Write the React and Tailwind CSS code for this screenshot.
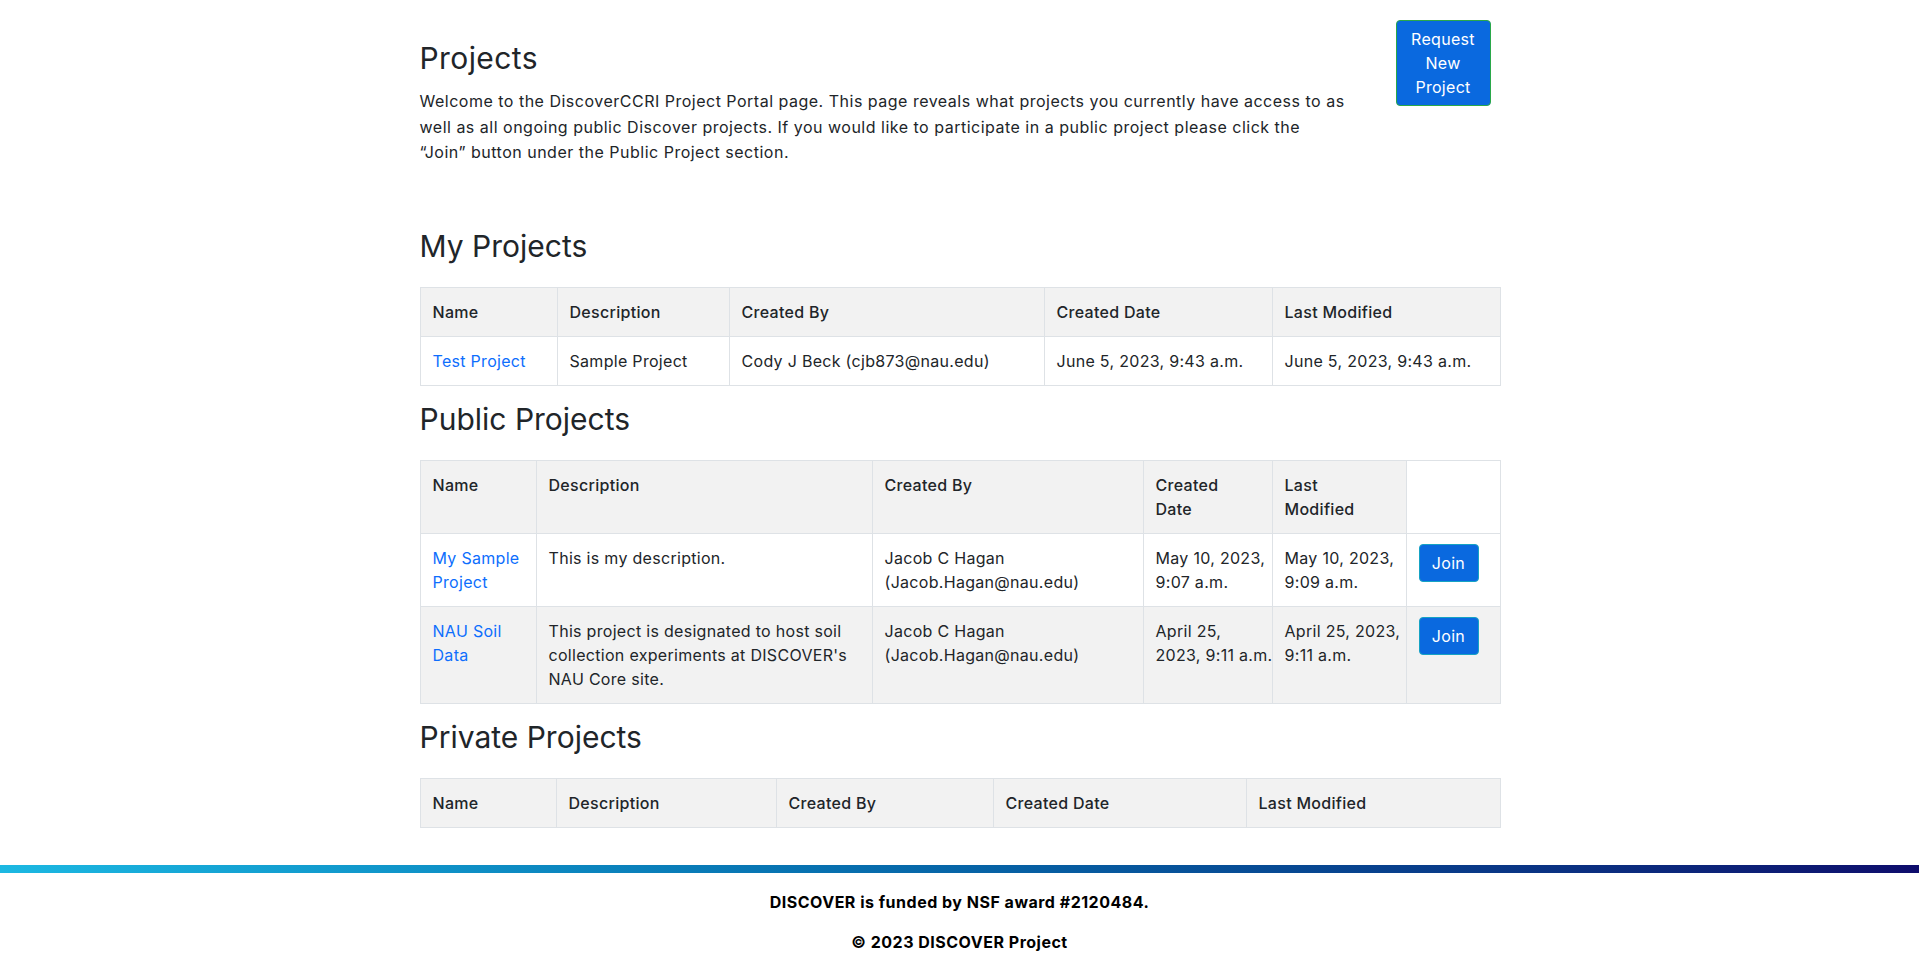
import React from "react";

const F = { fontFamily: "Inter, 'Noto Sans', sans-serif" };

function JoinBtn() {
  return (
    <button className="h-[38px] w-[60px] rounded-[4px] border border-[#16a3c4] bg-[#0a69df] text-[16px] leading-[24px] tracking-[0.3px] text-white">
      Join
    </button>
  );
}

const th = "border border-[#dee2e6] px-3 py-3 text-left align-top whitespace-nowrap font-medium text-[16px] leading-[24px] tracking-[0.3px] text-[#212529]";
const td = "border border-[#dee2e6] px-3 py-3 text-left align-top whitespace-nowrap text-[16px] leading-[24px] tracking-[0.3px] text-[#212529]";
const link = "text-[#0d6efd]";

function Heading({ children }) {
  return (
    <h2 className="mb-[22px] h-[38px] text-[30px] leading-[38px] font-normal text-[#212529]">{children}</h2>
  );
}

export default function App() {
  return (
    <div className="min-h-screen bg-white text-[#212529]" style={F}>
      <main className="mx-auto w-[1080px]">
        <div className="flex items-start justify-between pt-[20px]">
          <div className="pt-[19px]">
            <h1 className="h-[38px] text-[30px] leading-[38px] font-normal tracking-[0.4px]">Projects</h1>
            <p className="mt-[12px] whitespace-nowrap text-[16px] leading-[25.6px] tracking-[0.5px]">
              Welcome to the DiscoverCCRI Project Portal page. This page reveals what projects you currently have access to as
              <br />
              well as all ongoing public Discover projects. If you would like to participate in a public project please click the
              <br />
              “Join” button under the Public Project section.
            </p>
          </div>
          <button className="mr-[9px] w-[95px] rounded-[4px] border border-[#2aa84a] bg-[#0a69df] px-3 py-1.5 text-center text-[16px] leading-[24px] tracking-[0.3px] text-white">
            Request
            <br />
            New
            <br />
            Project
          </button>
        </div>

        <div className="mt-[61px]">
          <Heading>My Projects</Heading>
          <table className="mb-[14px] w-[1080px] table-fixed border-collapse">
            <thead>
              <tr className="bg-[#f2f2f2]">
                <th className={`${th} w-[137px]`}>Name</th>
                <th className={`${th} w-[172px]`}>Description</th>
                <th className={`${th} w-[315px]`}>Created By</th>
                <th className={`${th} w-[228px]`}>Created Date</th>
                <th className={`${th} w-[228px]`}>Last Modified</th>
              </tr>
            </thead>
            <tbody>
              <tr className="bg-white">
                <td className={td}><span className={link}>Test Project</span></td>
                <td className={td}>Sample Project</td>
                <td className={td}>Cody J Beck (cjb873@nau.edu)</td>
                <td className={td}>June 5, 2023, 9:43 a.m.</td>
                <td className={td}>June 5, 2023, 9:43 a.m.</td>
              </tr>
            </tbody>
          </table>

          <Heading>Public Projects</Heading>
          <table className="mb-[14px] w-[1080px] table-fixed border-collapse">
            <thead>
              <tr className="bg-[#f2f2f2]">
                <th className={`${th} w-[116px]`}>Name</th>
                <th className={`${th} w-[336px]`}>Description</th>
                <th className={`${th} w-[271px]`}>Created By</th>
                <th className={`${th} w-[129px]`}>Created<br />Date</th>
                <th className={`${th} w-[134px]`}>Last<br />Modified</th>
                <th className={`${th} w-[94px] bg-white`}></th>
              </tr>
            </thead>
            <tbody>
              <tr className="bg-white">
                <td className={td}><span className={link}>My Sample<br />Project</span></td>
                <td className={td}>This is my description.</td>
                <td className={td}>Jacob C Hagan<br />(Jacob.Hagan@nau.edu)</td>
                <td className={td}>May 10, 2023,<br />9:07 a.m.</td>
                <td className={td}>May 10, 2023,<br />9:09 a.m.</td>
                <td className={`${td} pt-[10px]`}><JoinBtn /></td>
              </tr>
              <tr className="bg-[#f2f2f2]">
                <td className={td}><span className={link}>NAU Soil<br />Data</span></td>
                <td className={td}>This project is designated to host soil<br />collection experiments at DISCOVER's<br />NAU Core site.</td>
                <td className={td}>Jacob C Hagan<br />(Jacob.Hagan@nau.edu)</td>
                <td className={td}>April 25,<br />2023, 9:11 a.m.</td>
                <td className={td}>April 25, 2023,<br />9:11 a.m.</td>
                <td className={`${td} pt-[10px]`}><JoinBtn /></td>
              </tr>
            </tbody>
          </table>

          <Heading>Private Projects</Heading>
          <table className="w-[1080px] table-fixed border-collapse">
            <thead>
              <tr className="bg-[#f2f2f2]">
                <th className={`${th} w-[136px]`}>Name</th>
                <th className={`${th} w-[220px]`}>Description</th>
                <th className={`${th} w-[217px]`}>Created By</th>
                <th className={`${th} w-[253px]`}>Created Date</th>
                <th className={`${th} w-[254px]`}>Last Modified</th>
              </tr>
            </thead>
          </table>
        </div>
      </main>

      <footer className="mt-[37px]">
        <div className="h-[8px] w-full bg-gradient-to-r from-[#1cb8e2] to-[#0e0c6c]"></div>
        <p className="mt-[17px] text-center text-[16px] font-bold leading-[24px] tracking-[0.5px] text-black">
          DISCOVER is funded by NSF award #2120484.
        </p>
        <p className="mt-[16px] pb-[16px] text-center text-[16px] font-bold leading-[24px] tracking-[0.5px] text-black">
          © 2023 DISCOVER Project
        </p>
      </footer>
    </div>
  );
}
